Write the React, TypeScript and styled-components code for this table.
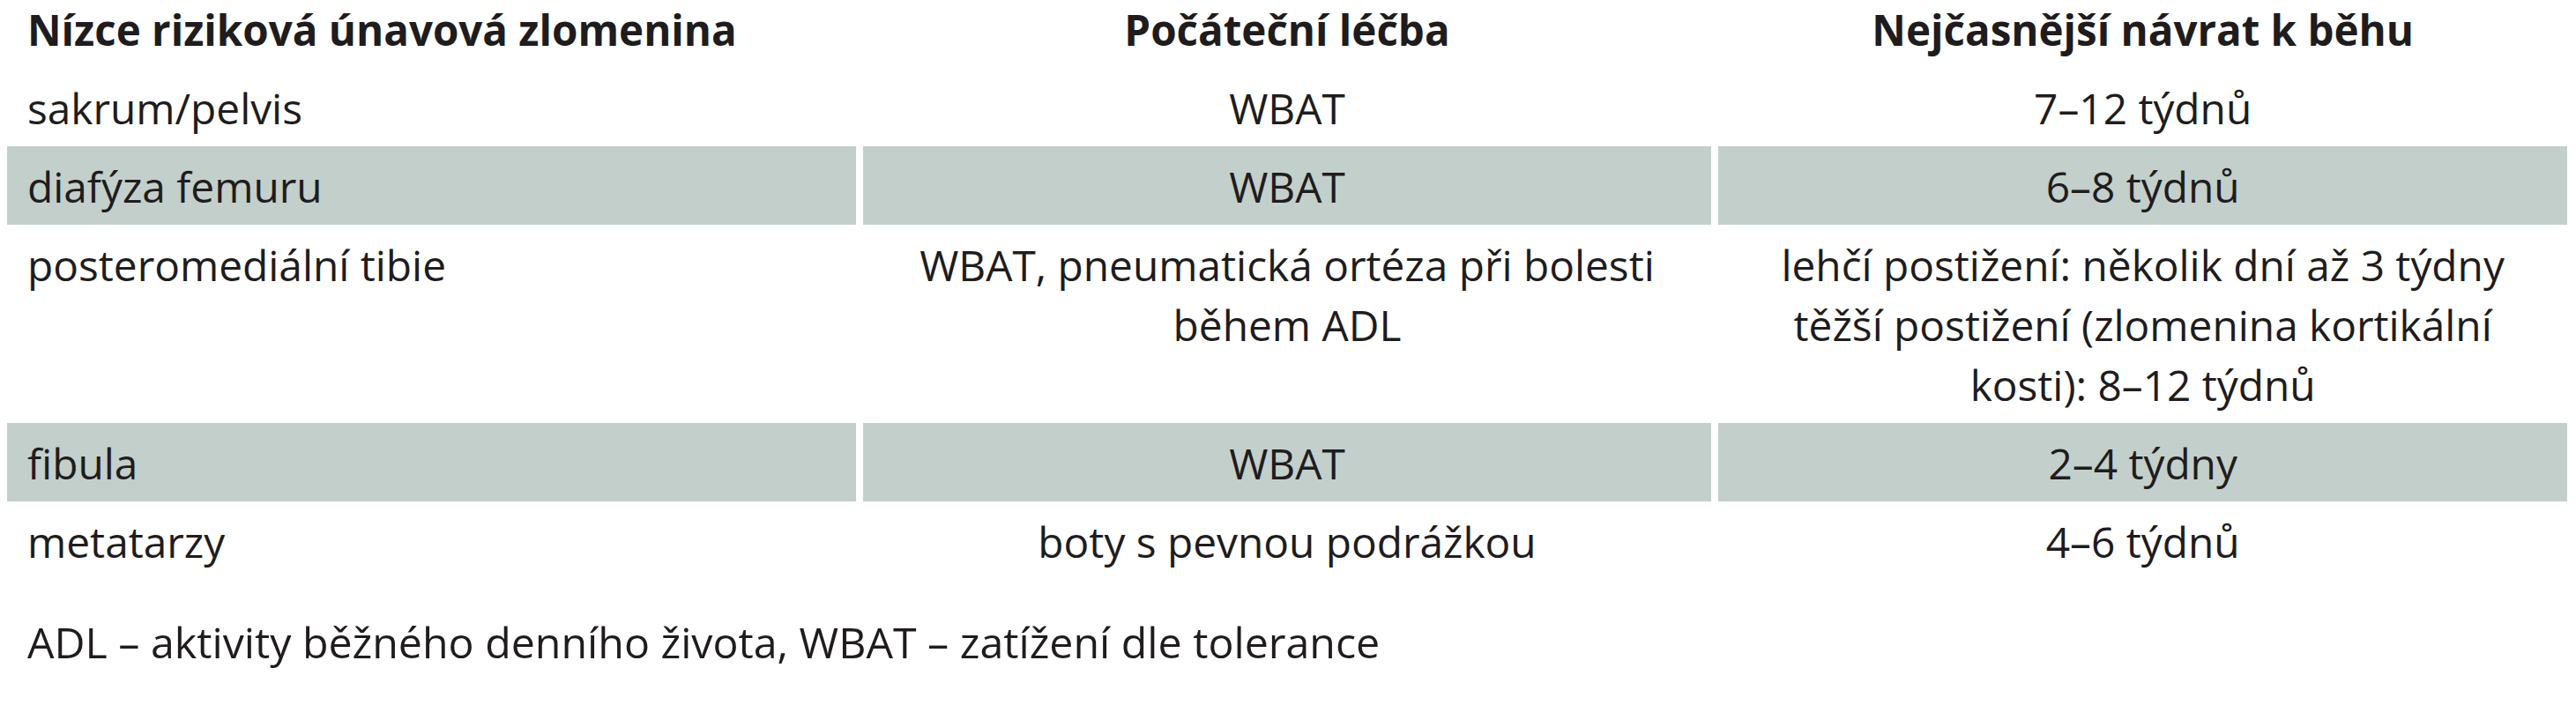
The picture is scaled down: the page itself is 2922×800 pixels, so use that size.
import React from "react";
import styled, { createGlobalStyle } from "styled-components";

const GlobalStyle = createGlobalStyle`
  html, body {
    margin: 0;
    padding: 0;
    background: #ffffff;
  }
  body {
    font-family: "Open Sans", "Noto Sans", sans-serif;
    font-stretch: 90%;
    color: #201c1d;
  }
`;

const Page = styled.div`
  width: 2922px;
  padding: 0 10px 0 8px;
  box-sizing: border-box;
`;

const Table = styled.div`
  display: grid;
  grid-template-columns: repeat(3, 1fr);
  column-gap: 8px;
`;

type Align = "left" | "center";

const HeadCell = styled.div<{ $align: Align }>`
  font-size: 47.5px;
  font-weight: 700;
  line-height: 68px;
  padding: 0 23px 9px;
  text-align: ${(p) => p.$align};
`;

const Cell = styled.div<{ $align: Align; $shaded: boolean }>`
  font-size: 47.8px;
  font-weight: 400;
  line-height: 68px;
  padding: 12px 23px 9px;
  text-align: ${(p) => p.$align};
  background: ${(p) => (p.$shaded ? "#c3cfcb" : "transparent")};
`;

const Note = styled.p`
  margin: 36px 0 0;
  padding-left: 23px;
  font-size: 48.3px;
  line-height: 68px;
`;

type Row = { cells: React.ReactNode[]; shaded: boolean };

const headers = [
  "Nízce riziková únavová zlomenina",
  "Počáteční léčba",
  "Nejčasnější návrat k běhu",
];

const rows: Row[] = [
  { cells: ["sakrum/pelvis", "WBAT", "7–12 týdnů"], shaded: false },
  { cells: ["diafýza femuru", "WBAT", "6–8 týdnů"], shaded: true },
  {
    cells: [
      "posteromediální tibie",
      <>
        WBAT, pneumatická ortéza při bolesti
        <br />
        během ADL
      </>,
      <>
        lehčí postižení: několik dní až 3 týdny
        <br />
        těžší postižení (zlomenina kortikální
        <br />
        kosti): 8–12 týdnů
      </>,
    ],
    shaded: false,
  },
  { cells: ["fibula", "WBAT", "2–4 týdny"], shaded: true },
  { cells: ["metatarzy", "boty s pevnou podrážkou", "4–6 týdnů"], shaded: false },
];

export default function App() {
  return (
    <>
      <GlobalStyle />
      <Page>
        <Table>
          {headers.map((h, i) => (
            <HeadCell key={h} $align={i === 0 ? "left" : "center"}>
              {h}
            </HeadCell>
          ))}
          {rows.map((r, ri) =>
            r.cells.map((c, ci) => (
              <Cell
                key={`${ri}-${ci}`}
                $align={ci === 0 ? "left" : "center"}
                $shaded={r.shaded}
              >
                {c}
              </Cell>
            ))
          )}
        </Table>
        <Note>ADL – aktivity běžného denního života, WBAT – zatížení dle tolerance</Note>
      </Page>
    </>
  );
}
